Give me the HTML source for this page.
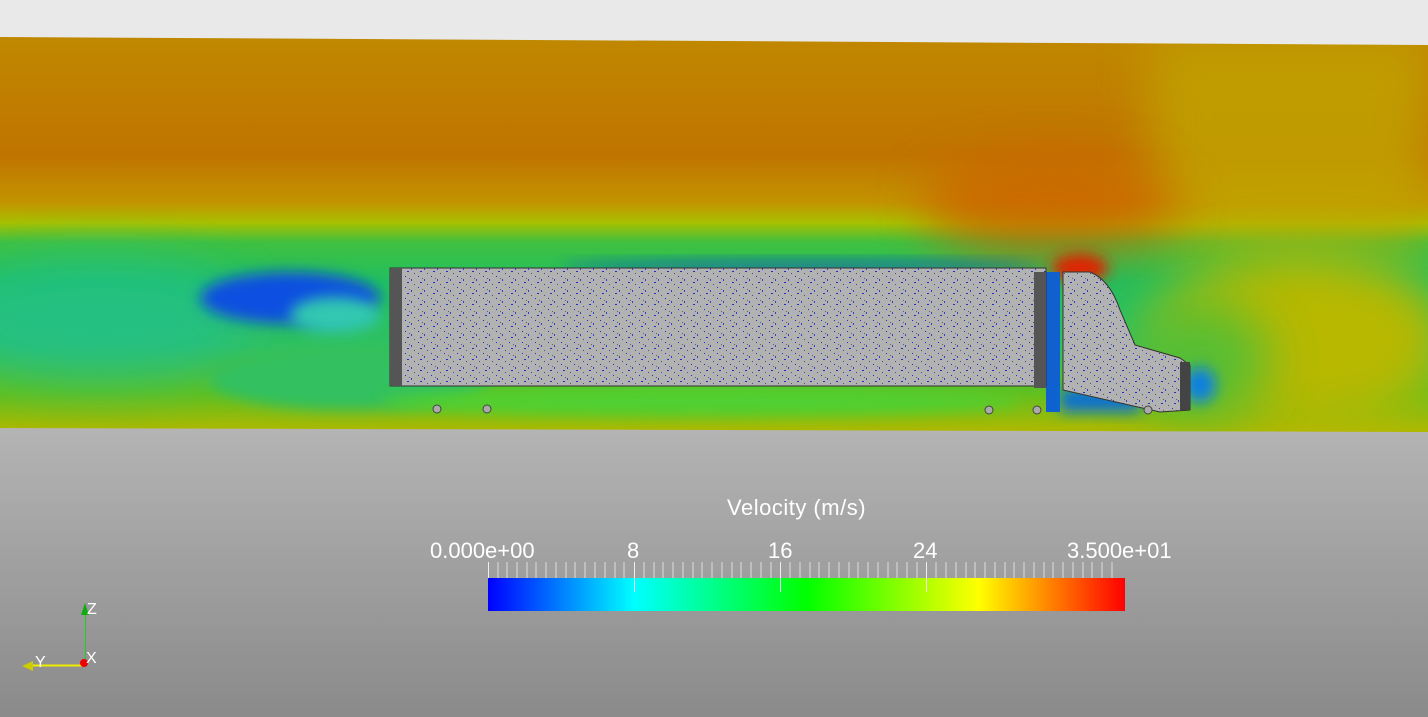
<!DOCTYPE html>
<html><head><style>
html,body{margin:0;padding:0;width:1428px;height:717px;overflow:hidden;background:#e9e9e9;font-family:"Liberation Sans",sans-serif}
.lbl{position:absolute;color:#fff;font-size:22px;white-space:nowrap}
</style></head><body>
<svg width="1428" height="717" style="position:absolute;left:0;top:0">
<defs>
<linearGradient id="gnd" x1="0" y1="0" x2="0" y2="1">
<stop offset="0" stop-color="#b4b4b4"/><stop offset="1" stop-color="#8a8a8a"/></linearGradient>
<linearGradient id="fld" x1="0" y1="0" x2="0" y2="1">
<stop offset="0" stop-color="#c08800"/><stop offset="0.3" stop-color="#c07400"/><stop offset="0.42" stop-color="#c29400"/>
<stop offset="0.47" stop-color="#a8c000"/><stop offset="0.52" stop-color="#40c040"/><stop offset="0.62" stop-color="#20c060"/>
<stop offset="0.78" stop-color="#30c060"/><stop offset="0.9" stop-color="#60c020"/><stop offset="1" stop-color="#b0b800"/></linearGradient>
<filter id="b1" x="-50%" y="-50%" width="200%" height="200%"><feGaussianBlur stdDeviation="25"/></filter>
<filter id="b2" x="-50%" y="-50%" width="200%" height="200%"><feGaussianBlur stdDeviation="7"/></filter>
<pattern id="spk" width="13" height="11" patternUnits="userSpaceOnUse">
<rect width="13" height="11" fill="#b2b2b2"/><rect x="2" y="1" width="1" height="1" fill="#2030c0"/><rect x="8" y="4" width="1" height="2" fill="#3040d0"/><rect x="4" y="7" width="2" height="1" fill="#2030c0"/><rect x="11" y="9" width="1" height="1" fill="#505080"/><rect x="6" y="3" width="1" height="1" fill="#606060"/></pattern>
<linearGradient id="bar" x1="0" x2="1">
<stop offset="0" stop-color="#0000ff"/><stop offset="0.23" stop-color="#00ffff"/><stop offset="0.5" stop-color="#00ff00"/><stop offset="0.77" stop-color="#ffff00"/><stop offset="1" stop-color="#ff0000"/></linearGradient>
<clipPath id="fc"><polygon points="0,37 1428,45 1428,432 0,428"/></clipPath>
</defs>
<rect x="0" y="428" width="1428" height="289" fill="url(#gnd)"/>
<g clip-path="url(#fc)">
<rect x="0" y="37" width="1428" height="395" fill="url(#fld)"/>
<rect x="1150" y="37" width="278" height="200" fill="#c0a400" filter="url(#b1)" opacity="0.8"/>
<ellipse cx="1300" cy="340" rx="150" ry="90" fill="#b8b800" filter="url(#b1)"/>
<ellipse cx="1050" cy="205" rx="130" ry="50" fill="#cc6000" filter="url(#b1)" opacity="0.8"/>
<ellipse cx="1080" cy="268" rx="28" ry="14" fill="#e02000" filter="url(#b2)"/>
<ellipse cx="1200" cy="360" rx="70" ry="60" fill="#40c040" filter="url(#b1)" opacity="0.8"/>
<ellipse cx="100" cy="320" rx="150" ry="60" fill="#20c090" filter="url(#b1)" opacity="0.7"/>
<ellipse cx="290" cy="298" rx="90" ry="26" fill="#1050e0" filter="url(#b2)"/>
<ellipse cx="335" cy="315" rx="45" ry="18" fill="#30c8b0" filter="url(#b2)"/>
<ellipse cx="350" cy="380" rx="140" ry="30" fill="#30c060" filter="url(#b2)"/>
<ellipse cx="700" cy="402" rx="320" ry="14" fill="#50d030" filter="url(#b2)"/>
<rect x="1046" y="272" width="14" height="140" fill="#1060d0"/>
<rect x="1060" y="388" width="80" height="24" fill="#1070d0" filter="url(#b2)"/>
<ellipse cx="1200" cy="385" rx="16" ry="18" fill="#1080e0" filter="url(#b2)"/>
<ellipse cx="800" cy="266" rx="240" ry="6" fill="#1040d0" filter="url(#b2)" opacity="0.6"/>
</g>
<rect x="390" y="268" width="656" height="118" fill="url(#spk)" stroke="#333" stroke-width="1"/>
<rect x="390" y="268" width="12" height="118" fill="#555"/>
<rect x="1034" y="272" width="12" height="116" fill="#555"/>
<path d="M1063,272 L1090,272 Q1110,280 1120,310 L1135,345 L1180,358 L1190,365 L1190,410 L1160,412 L1063,390 Z" fill="url(#spk)" stroke="#333"/>
<rect x="1180" y="362" width="10" height="48" fill="#444"/>
<g fill="#aaa" stroke="#444"><circle cx="437" cy="409" r="4"/><circle cx="487" cy="409" r="4"/><circle cx="989" cy="410" r="4"/><circle cx="1037" cy="410" r="4"/><circle cx="1148" cy="410" r="4"/></g>
<rect x="488" y="578" width="637" height="33" fill="url(#bar)"/>
<g stroke="#eee" stroke-width="1">
<line x1="488.5" y1="562" x2="488.5" y2="578"/><line x1="634.5" y1="562" x2="634.5" y2="592"/><line x1="780.5" y1="562" x2="780.5" y2="592"/><line x1="926.5" y1="562" x2="926.5" y2="592"/>
</g>
<g stroke="#ddd" stroke-width="1">
<path d="M498 562v16M507 562v16M517 562v16M527 562v16M536 562v16M546 562v16M556 562v16M566 562v16M575 562v16M585 562v16M595 562v16M605 562v16M615 562v16M624 562v16M644 562v16M654 562v16M663 562v16M673 562v16M683 562v16M693 562v16M702 562v16M712 562v16M722 562v16M732 562v16M741 562v16M751 562v16M761 562v16M771 562v16M790 562v16M800 562v16M810 562v16M819 562v16M829 562v16M839 562v16M849 562v16M858 562v16M868 562v16M878 562v16M888 562v16M897 562v16M907 562v16M917 562v16M936 562v16M946 562v16M956 562v16M966 562v16M975 562v16M985 562v16M995 562v16M1005 562v16M1014 562v16M1024 562v16M1034 562v16M1044 562v16M1053 562v16M1063 562v16M1073 562v16M1083 562v16M1092 562v16M1102 562v16M1112 562v16"/>
</g>
<line x1="85.5" y1="612" x2="85.5" y2="664" stroke="#2c2"/>
<polygon points="85,603 81,615 89,615" fill="#1a1"/>
<line x1="30" y1="665.5" x2="85" y2="665.5" stroke="#ee0" stroke-width="2"/>
<polygon points="22,666 33,661 33,671" fill="#cc0"/>
<circle cx="84" cy="663" r="4" fill="#e00"/>
<text x="87" y="614" fill="#fff" font-size="16" font-family="Liberation Sans">Z</text>
<text x="35" y="667" fill="#fff" font-size="16" font-family="Liberation Sans">Y</text>
<text x="86" y="663" fill="#fff" font-size="16" font-family="Liberation Sans">X</text>
</svg>
<div class="lbl" style="left:727px;top:495px;letter-spacing:0.5px">Velocity (m/s)</div>
<div class="lbl" style="left:430px;top:538px">0.000e+00</div>
<div class="lbl" style="left:627px;top:538px">8</div>
<div class="lbl" style="left:768px;top:538px">16</div>
<div class="lbl" style="left:913px;top:538px">24</div>
<div class="lbl" style="left:1067px;top:538px">3.500e+01</div>
</body></html>
